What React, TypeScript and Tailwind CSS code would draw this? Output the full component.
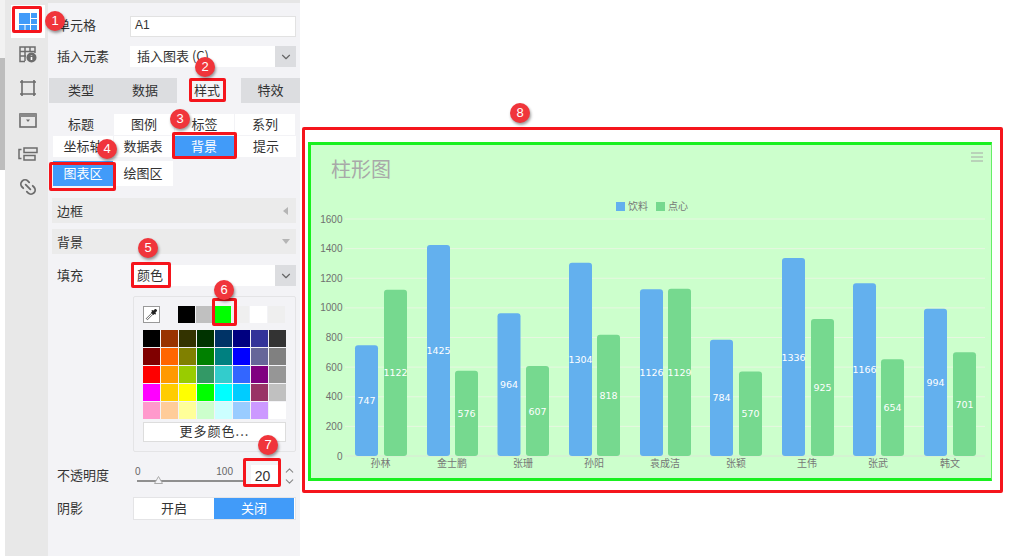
import { ChevronDown, ChevronUp, Link2 } from "lucide-react";

const font = "font-['Noto_Sans_CJK_SC','Liberation_Sans',sans-serif]";

const palette = [
  ["#000000", "#993300", "#333300", "#003300", "#003366", "#000080", "#333399", "#333333"],
  ["#800000", "#FF6600", "#808000", "#008000", "#008080", "#0000FF", "#666699", "#808080"],
  ["#FF0000", "#FF9900", "#99CC00", "#339966", "#33CCCC", "#3366FF", "#800080", "#969696"],
  ["#FF00FF", "#FFCC00", "#FFFF00", "#00FF00", "#00FFFF", "#00CCFF", "#993366", "#C0C0C0"],
  ["#FF99CC", "#FFCC99", "#FFFF99", "#CCFFCC", "#CCFFFF", "#99CCFF", "#CC99FF", "#FFFFFF"],
];

const bars = [
  { name: "孙林", cx: 380.5, a: 747, ax: 355, b: 1122, bx: 384 },
  { name: "金士鹏", cx: 452, a: 1425, ax: 427, b: 576, bx: 455 },
  { name: "张珊", cx: 523, a: 964, ax: 497.5, b: 607, bx: 526 },
  { name: "孙阳", cx: 594, a: 1304, ax: 569, b: 818, bx: 597 },
  { name: "袁成洁", cx: 665, a: 1126, ax: 640, b: 1129, bx: 668 },
  { name: "张颖", cx: 736, a: 784, ax: 710, b: 570, bx: 739 },
  { name: "王伟", cx: 807, a: 1336, ax: 782, b: 925, bx: 811 },
  { name: "张武", cx: 878, a: 1166, ax: 853, b: 654, bx: 881 },
  { name: "韩文", cx: 950, a: 994, ax: 924, b: 701, bx: 953 },
];

const BASE = 456;
const SCALE = 237 / 1600;

function Badge({ n, x, y }: { n: number; x: number; y: number }) {
  return (
    <div
      className="absolute w-[20px] h-[20px] rounded-full bg-[#f0353b] text-white text-[13px] flex items-center justify-center shadow-[1px_2px_3px_rgba(0,0,0,0.4)] font-['Liberation_Sans',sans-serif]"
      style={{ left: x - 10, top: y - 10 }}
    >
      {n}
    </div>
  );
}

function RedBox({ x, y, w, h }: { x: number; y: number; w: number; h: number }) {
  return (
    <div
      className="absolute border-[3px] border-[#f5151c] rounded-[2px]"
      style={{ left: x, top: y, width: w, height: h }}
    />
  );
}

function SideIcon({ children, active }: { children: React.ReactNode; active?: boolean }) {
  return (
    <div className={`h-[33px] w-[34px] flex items-center justify-center ${active ? "bg-white" : ""}`}>
      {children}
    </div>
  );
}

function Select({ text, inner }: { text: string; inner?: boolean }) {
  return (
    <div className="flex-1 h-[21px] flex bg-white">
      <div className={`flex-1 text-[13px] leading-[19px] text-[#333] ${inner ? "pl-[7px]" : "pl-[4px]"}`}>{text}</div>
      <div className="w-[21px] bg-[#dcdde0] flex items-center justify-center">
        <ChevronDown size={14} className="text-[#666]" />
      </div>
    </div>
  );
}

function SubTab({ label, w, white, blue }: { label: string; w: number; white?: boolean; blue?: boolean }) {
  return (
    <div
      className={`h-[21px] text-center text-[13px] leading-[19px] ${blue ? "bg-[#419bf9] text-white" : white ? "bg-white text-[#333]" : "text-[#333]"}`}
      style={{ width: w }}
    >
      {label}
    </div>
  );
}

function Chart() {
  return (
    <svg viewBox="311 145 680 333" className="w-full h-full block">
      <text x="331" y="177" fontSize="20" fill="#a8a8a8">柱形图</text>
      <g fill="none" stroke="#a6a6a6" strokeWidth="1">
        <path d="M971 153h12M971 157h12M971 161h12" />
      </g>
      <rect x="616" y="202" width="9" height="9" fill="#63b0ee" />
      <text x="628" y="210" fontSize="10" fill="#777">饮料</text>
      <rect x="656" y="202" width="9" height="9" fill="#76d98f" />
      <text x="668" y="210" fontSize="10" fill="#777">点心</text>
      {[0, 200, 400, 600, 800, 1000, 1200, 1400, 1600].map((v) => {
        const y = BASE - v * SCALE;
        return (
          <g key={v}>
            <line x1="345" x2="985" y1={y} y2={y} stroke={v === 0 ? "#dbe6d6" : "#e6f7e0"} strokeWidth="1" />
            <text x="342.5" y={y + 3.5} fontSize="10" textAnchor="end" fill="#6f6f6f" className="font-['Liberation_Sans',sans-serif]">{v}</text>
          </g>
        );
      })}
      {bars.map((d) => {
        const ah = d.a * SCALE;
        const bh = d.b * SCALE;
        return (
          <g key={d.name}>
            <rect x={d.ax} y={BASE - ah} width="23" height={ah} rx="3" fill="#63b0ee" />
            <rect x={d.bx} y={BASE - bh} width="23" height={bh} rx="3" fill="#76d98f" />
            <text x={d.ax + 11.5} y={BASE - ah / 2 + 3.5} fontSize="9.5" textAnchor="middle" fill="#fff" className="font-['DejaVu_Sans',sans-serif]">{d.a}</text>
            <text x={d.bx + 11.5} y={BASE - bh / 2 + 3.5} fontSize="9.5" textAnchor="middle" fill="#fff" className="font-['DejaVu_Sans',sans-serif]">{d.b}</text>
            <text x={d.cx} y="467" fontSize="10" textAnchor="middle" fill="#777">{d.name}</text>
          </g>
        );
      })}
    </svg>
  );
}

export default function App() {
  return (
    <div className={`relative w-[1031px] h-[556px] overflow-hidden bg-white flex ${font}`}>
      {/* Left strip */}
      <div className="w-[5px] flex flex-col shrink-0">
        <div className="h-[58px] bg-[#f2f2f2]" />
        <div className="h-[112px] bg-[#bdbdbd]" />
        <div className="flex-1 bg-white" />
      </div>

      {/* Icon rail */}
      <div className="w-[43px] shrink-0 bg-[#e8e8e8] flex flex-col items-center pt-[5px] pl-[3px]">
        <SideIcon active>
          <svg width="18" height="17" viewBox="0 0 18 17" fill="#419bf9">
            <rect x="0" y="0" width="11" height="11" />
            <rect x="12" y="0" width="6" height="5" />
            <rect x="12" y="6" width="6" height="5" />
            <rect x="0" y="12" width="5.5" height="5" />
            <rect x="6.5" y="12" width="4.5" height="5" />
            <rect x="12" y="12" width="6" height="5" />
          </svg>
        </SideIcon>
        <SideIcon>
          <svg width="18" height="17" viewBox="0 0 18 17" fill="none" stroke="#6c6c6c" strokeWidth="1.5">
            <path d="M6 15.5H1V1h15v6M1 5.5h15M1 10h6M6 1v14M11 1v5" />
            <circle cx="12.5" cy="11.5" r="5" fill="#6c6c6c" stroke="none" />
            <path d="M12.5 9v.6M12.5 11v3" stroke="#fff" strokeWidth="1.6" />
          </svg>
        </SideIcon>
        <SideIcon>
          <svg width="18" height="18" viewBox="0 0 18 18" fill="none" stroke="#6c6c6c" strokeWidth="1.6">
            <path d="M3 1v16M15 1v16M1 3h16M1 15h16" />
          </svg>
        </SideIcon>
        <SideIcon>
          <svg width="18" height="15" viewBox="0 0 18 15" fill="none">
            <rect x="1" y="1" width="16" height="13" stroke="#6c6c6c" strokeWidth="1.6" />
            <rect x="1" y="1" width="16" height="3" fill="#8a8a8a" />
            <path d="M7 6.5h4l-2 2.5z" fill="#6c6c6c" />
          </svg>
        </SideIcon>
        <SideIcon>
          <svg width="20" height="14" viewBox="0 0 20 14" fill="none" stroke="#6c6c6c" strokeWidth="1.5">
            <rect x="6" y="1" width="13" height="4.5" />
            <rect x="6" y="8.5" width="11" height="4.5" />
            <path d="M3.5 2.5H1v9h2.5" />
          </svg>
        </SideIcon>
        <SideIcon>
          <Link2 size={20} strokeWidth={2.2} className="text-[#6c6c6c] rotate-45" />
        </SideIcon>
      </div>

      {/* Property panel */}
      <div className="w-[252px] shrink-0 h-full bg-[#f3f3f6] border-t-[3px] border-[#e6e6e6] flex flex-col text-[13px] text-[#333]">
        <div className="flex items-center h-[22px] mt-[12px] pl-[9px] pr-[4px]">
          <div className="w-[73px] pb-[2px]">单元格</div>
          <div className="flex-1 h-[21px] bg-white border border-[#e2e2e2] pl-[4px] text-[12px] leading-[17px] font-['Liberation_Sans',sans-serif]">A1</div>
        </div>
        <div className="flex items-center h-[21px] mt-[9px] pl-[9px] pr-[4px]">
          <div className="w-[73px] pb-[2px]">插入元素</div>
          <Select text="插入图表 (C)" inner />
        </div>

        {/* Main tabs */}
        <div className="flex h-[25px] mt-[11px] pl-[1px] leading-[23px] text-center">
          <div className="w-[128px] bg-[#dcdde0] flex">
            <div className="w-[64px]">类型</div>
            <div className="w-[64px]">数据</div>
          </div>
          <div className="w-[64px] pr-[4px]">样式</div>
          <div className="w-[59px] bg-[#dcdde0]">特效</div>
        </div>

        {/* Sub tabs */}
        <div className="flex mt-[11px] pl-[1px] gap-[1px]">
          <SubTab label="标题" w={64} />
          <SubTab label="图例" w={60} white />
          <SubTab label="标签" w={59} white />
          <SubTab label="系列" w={60} white />
        </div>
        <div className="flex mt-[1px] pl-[5px] gap-[1px]">
          <SubTab label="坐标轴" w={60} white />
          <SubTab label="数据表" w={58} white />
          <SubTab label="背景" w={62} blue />
          <SubTab label="提示" w={60} white />
        </div>
        <div className="flex mt-[4px] pl-[5px]">
          <div className="w-[60px] h-[25px] bg-[#419bf9] text-white text-center leading-[23px]">图表区</div>
          <div className="w-[60px] h-[25px] bg-white text-center leading-[23px]">绘图区</div>
        </div>

        {/* Sections */}
        <div className="h-[25px] mt-[12px] mx-[4px] bg-[#ebebeb] flex items-center justify-between pl-[5px] pr-[8px]">
          <span>边框</span>
          <span className="w-0 h-0 border-y-[4px] border-y-transparent border-r-[5px] border-r-[#b5b5b5]" />
        </div>
        <div className="h-[25px] mt-[6px] mx-[4px] bg-[#ebebeb] flex items-center justify-between pl-[5px] pr-[6px]">
          <span>背景</span>
          <span className="w-0 h-0 border-x-[4.5px] border-x-transparent border-t-[5px] border-t-[#b5b5b5]" />
        </div>

        <div className="flex items-center h-[21px] mt-[11px] pl-[9px] pr-[4px]">
          <div className="w-[76px] pb-[2px]">填充</div>
          <Select text="颜色" />
        </div>

        {/* Colour picker */}
        <div className="ml-[85px] mr-[4px] mt-[10px] h-[156px] border border-[#e4e4e6] rounded-[2px] px-[9px] pt-[9px]">
          <div className="flex items-center h-[17px]">
            <div className="w-[17px] h-[17px] bg-white border border-[#999] flex items-center justify-center">
              <svg width="13" height="13" viewBox="0 0 13 13" fill="none">
                <path d="M1.5 11.5L7.5 5.5" stroke="#777" strokeWidth="2.4" />
                <path d="M1.5 11.5L7.5 5.5" stroke="#fff" strokeWidth="1" />
                <path d="M6 4.5l2.5 2.5 1-1 1 .5.5-.5-.5-1.5 1.5-1.5c.5-1-1-2.5-2-2L8.5 2.5 7 2l-.5.5.5 1z" fill="#222" />
              </svg>
            </div>
            <div className="flex ml-[18px]">
              {["#000000", "#c0c0c0", "#00ff00", "#efefef", "#ffffff", "#efefef"].map((c, i) => (
                <div key={i} className="w-[17px] h-[17px] mr-[1px]" style={{ background: c }} />
              ))}
            </div>
          </div>
          <div className="mt-[7px] flex flex-col gap-[1px]">
            {palette.map((row, i) => (
              <div key={i} className="flex gap-[1px]">
                {row.map((c) => (
                  <div key={c} className="w-[17px] h-[17px]" style={{ background: c }} />
                ))}
              </div>
            ))}
          </div>
          <div className="mt-[3px] h-[20px] w-[143px] bg-white border border-[#ddd] text-center leading-[16px] tracking-[1px]">更多颜色...</div>
        </div>

        {/* Opacity */}
        <div className="flex h-[34px] mt-[7px] pl-[9px] pr-[4px] items-center">
          <div className="w-[76px] pb-[2px]">不透明度</div>
          <div className="relative w-[110px] h-full text-[10px] text-[#666] font-['Liberation_Sans',sans-serif]">
            <span className="absolute left-[2px] top-[5px]">0</span>
            <span className="absolute right-[10px] top-[5px]">100</span>
            <div className="absolute left-[4px] right-0 top-[21px] h-[2px] bg-[#8f8f8f]" />
            <svg className="absolute left-[21px] top-[17px]" width="9" height="8" viewBox="0 0 9 8">
              <path d="M4.5 0.5L8.5 7.5H0.5z" fill="#f3f3f6" stroke="#aaa" />
            </svg>
          </div>
          <div className="w-[29px] h-[22px] bg-white ml-[8px] pr-[6px] text-[14px] leading-[22px] text-center font-['Liberation_Sans',sans-serif]">20</div>
          <div className="ml-[3px] flex flex-col text-[#888]">
            <div className="h-[11px] flex items-center"><ChevronUp size={13} /></div>
            <div className="h-[11px] flex items-center"><ChevronDown size={13} /></div>
          </div>
        </div>

        {/* Shadow */}
        <div className="flex items-center h-[23px] mt-[4px] pl-[9px] pr-[4px]">
          <div className="w-[76px] pb-[2px]">阴影</div>
          <div className="flex-1 flex h-[23px] border border-[#e4e4e6] bg-white">
            <div className="w-[80px] text-center leading-[19px]">开启</div>
            <div className="w-[80px] bg-[#419bf9] text-white text-center leading-[19px]">关闭</div>
          </div>
        </div>
      </div>

      {/* Chart area */}
      <div className="flex-1 pl-[2px] pt-[127px]">
        <div className="w-[701px] h-[366px] border-[3px] border-[#f5151c] rounded-[2px] pt-[12px] pl-[3px]">
          <div className="w-[684px] h-[339px] bg-[#ccffcc] border-y-[3px] border-l-[3px] border-r border-y-[#19f01f] border-l-[#19f01f] border-r-[#66ee66]">
            <Chart />
          </div>
        </div>
      </div>

      {/* Annotations */}
      <RedBox x={12} y={6} w={30} h={27} />
      <RedBox x={189} y={78} w={37} h={24} />
      <RedBox x={172} y={132} w={65} h={27} />
      <RedBox x={49} y={162} w={67} h={29} />
      <RedBox x={131} y={262} w={40} h={26} />
      <RedBox x={212} y={298} w={25} h={28} />
      <RedBox x={243} y={458} w={38} h={29} />
      <Badge n={1} x={55} y={21} />
      <Badge n={2} x={205} y={67} />
      <Badge n={3} x={180} y={119} />
      <Badge n={4} x={107} y={149} />
      <Badge n={5} x={148} y={248} />
      <Badge n={6} x={224} y={290} />
      <Badge n={7} x={268} y={445} />
      <Badge n={8} x={520} y={113} />
    </div>
  );
}
